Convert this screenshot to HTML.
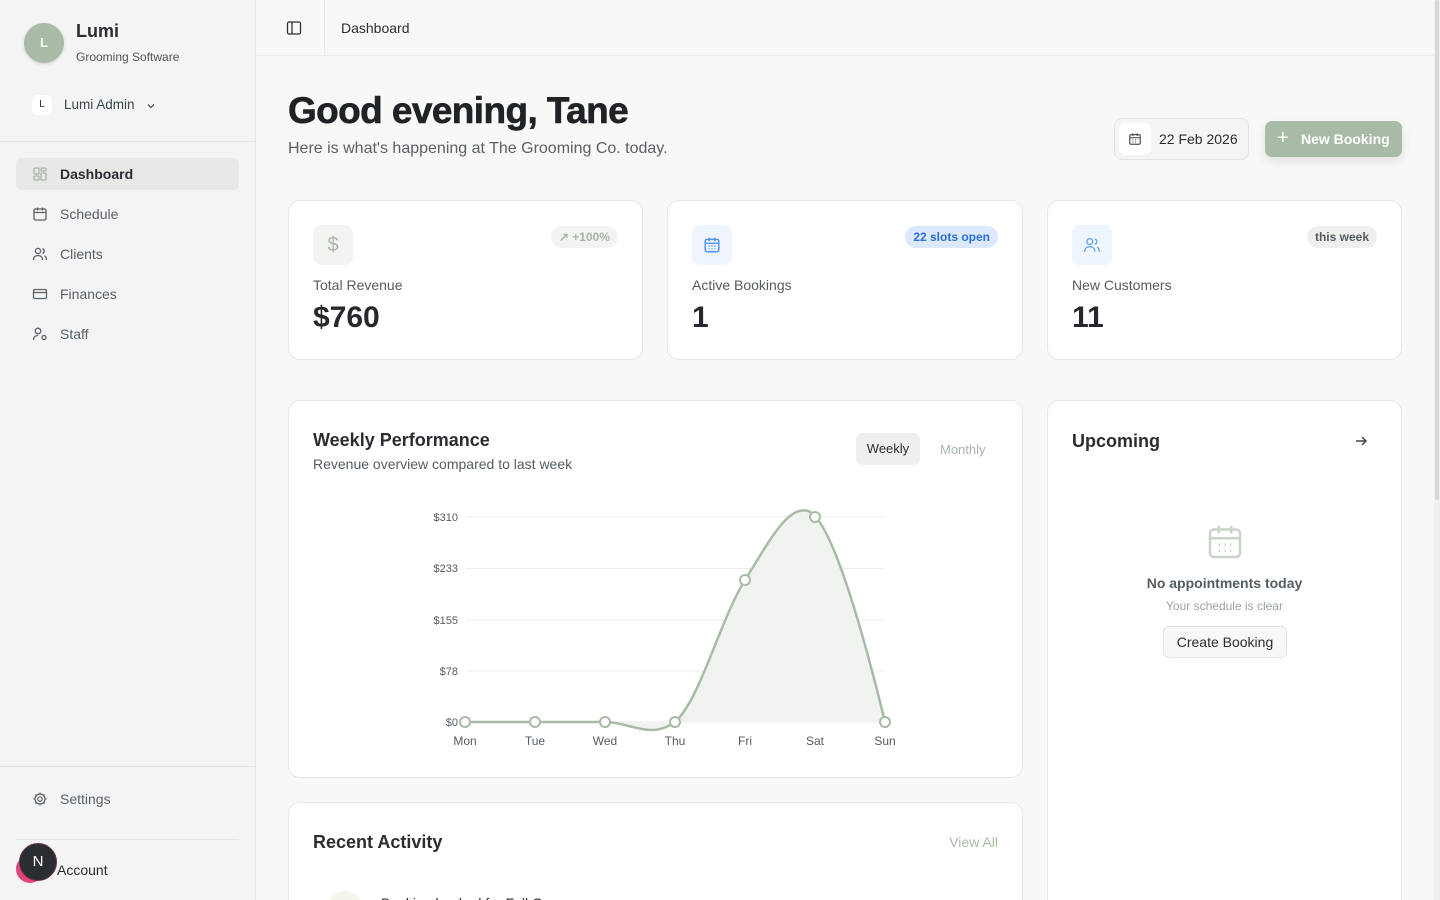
<!DOCTYPE html>
<html><head><meta charset="utf-8"><style>
*{box-sizing:border-box;margin:0;padding:0}
html,body{width:1440px;height:900px;overflow:hidden}
body{background:#f8f8f7;font-family:"Liberation Sans",sans-serif;color:#2a2d31;position:relative}
#w{position:absolute;left:0;top:0;width:1440px;height:900px;overflow:hidden}
.sb{position:absolute;left:0;top:0;width:256px;height:900px;background:#f3f4f3;border-right:1px solid #e6e6e3}
.logo{position:absolute;left:24px;top:23px;width:40px;height:40px;border-radius:50%;background:#a8bba6;color:#fff;font-weight:bold;font-size:13px;text-align:center;line-height:40px;box-shadow:0 1px 3px rgba(0,0,0,.15)}
.nav{position:absolute;left:16px;width:223px;height:32px;border-radius:6px;font-size:14px;color:#5a6068;display:flex;align-items:center;padding-left:16px}
.nav svg{margin-right:12px}
.card{position:absolute;background:#fff;border:1px solid #e6e6e2;border-radius:12px}
.ic{position:absolute;left:24px;top:24px;width:40px;height:40px;border-radius:8px;display:flex;align-items:center;justify-content:center}
.pill{position:absolute;top:25px;right:24px;height:22px;border-radius:11px;font-size:12px;font-weight:bold;padding:0 8px;line-height:22px}
.lbl{position:absolute;left:24px;top:76px;font-size:14px;color:#555b62}
.val{position:absolute;left:24px;top:100px;font-size:30px;font-weight:bold;color:#25282c}
</style></head><body><div id="w">
<div class="sb">
 <div class="logo">L</div>
 <div style="position:absolute;left:76px;top:21px;font-size:18px;font-weight:bold">Lumi</div>
 <div style="position:absolute;left:76px;top:50px;font-size:12px;color:#555">Grooming Software</div>
 <div style="position:absolute;left:32px;top:95px;width:20px;height:20px;background:#fff;border-radius:5px;font-size:10px;text-align:center;line-height:20px">L</div>
 <div style="position:absolute;left:64px;top:97px;font-size:13.5px;color:#3d444c">Lumi Admin</div>
 <svg style="position:absolute;left:145px;top:100px" width="12" height="12" viewBox="0 0 12 12"><path d="M3 4.5l3 3 3-3" stroke="#555" stroke-width="1.3" fill="none"/></svg>
 <div style="position:absolute;left:0;top:141px;width:256px;border-top:1px solid #e4e4e1"></div>
 <div class="nav" style="top:158px;background:#e6e9e5;color:#2a2d31;font-weight:bold">
  <svg width="16" height="16" viewBox="0 0 16 16" fill="none" stroke="#a8b6a8" stroke-width="1.3"><rect x="2" y="2" width="5" height="6" rx="1"/><rect x="9" y="2" width="5" height="3" rx="1"/><rect x="9" y="7" width="5" height="7" rx="1"/><rect x="2" y="10" width="5" height="4" rx="1"/></svg>Dashboard</div>
 <div class="nav" style="top:198px"><svg width="16" height="16" viewBox="0 0 16 16" fill="none" stroke="#5a6068" stroke-width="1.3"><rect x="2" y="3" width="12" height="11" rx="1.5"/><path d="M2 6.5h12M5.5 1.5v3M10.5 1.5v3"/></svg>Schedule</div>
 <div class="nav" style="top:238px"><svg width="16" height="16" viewBox="0 0 16 16" fill="none" stroke="#5a6068" stroke-width="1.3"><circle cx="6" cy="5" r="2.6"/><path d="M1.5 14c0-3 2-4.5 4.5-4.5s4.5 1.5 4.5 4.5M10.5 2.6a2.6 2.6 0 010 4.9M12.5 9.8c1.3.6 2 2 2 4.2"/></svg>Clients</div>
 <div class="nav" style="top:278px"><svg width="16" height="16" viewBox="0 0 16 16" fill="none" stroke="#5a6068" stroke-width="1.3"><rect x="1.5" y="3.5" width="13" height="9" rx="1.5"/><path d="M1.5 6.5h13"/></svg>Finances</div>
 <div class="nav" style="top:318px"><svg width="16" height="16" viewBox="0 0 16 16" fill="none" stroke="#5a6068" stroke-width="1.3"><circle cx="6" cy="5" r="2.8"/><path d="M1.5 14c0-3 2-4.5 4.5-4.5"/><circle cx="12" cy="11.5" r="2"/></svg>Staff</div>
 <div style="position:absolute;left:0;top:766px;width:256px;border-top:1px solid #e4e4e1"></div>
 <div class="nav" style="top:783px"><svg width="16" height="16" viewBox="0 0 16 16" fill="none" stroke="#5a6068" stroke-width="1.2"><circle cx="8" cy="8" r="2.2"/><circle cx="8" cy="8" r="5"/><path d="M8 1.5v1.5M8 13v1.5M1.5 8H3M13 8h1.5M3.4 3.4l1.1 1.1M11.5 11.5l1.1 1.1M3.4 12.6l1.1-1.1M11.5 4.5l1.1-1.1"/></svg>Settings</div>
 <div style="position:absolute;left:16px;top:839px;width:223px;border-top:1px solid #e4e4e1"></div>
 <div style="position:absolute;left:16px;top:855px;width:28px;height:28px;border-radius:50%;background:#e0457b"></div>
 <div style="position:absolute;left:19px;top:843px;width:38px;height:38px;border-radius:50%;background:#2a2d31;border:1px solid #6a3040;color:#fff;text-align:center;line-height:36px;font-size:15px">N</div>
 <div style="position:absolute;left:57px;top:862px;font-size:14px">Account</div>
</div>
<div style="position:absolute;left:256px;top:0;width:1178px;height:56px;border-bottom:1px solid #ebebe8">
 <svg style="position:absolute;left:30px;top:20px" width="16" height="16" viewBox="0 0 16 16" fill="none" stroke="#333" stroke-width="1.3"><rect x="1.5" y="2" width="13" height="12" rx="1.5"/><path d="M6 2v12"/></svg>
 <div style="position:absolute;left:68px;top:0;height:56px;border-left:1px solid #ebebe8"></div>
 <div style="position:absolute;left:85px;top:20px;font-size:14px">Dashboard</div>
</div>
<div style="position:absolute;right:0;top:0;width:6px;height:900px;background:#f0f0f0"><div style="margin:0 1px;height:500px;background:#d8d8d8;border-radius:3px"></div></div>
<div style="position:absolute;left:288px;top:90px;font-size:37px;font-weight:bold;letter-spacing:-.6px;color:#202326;-webkit-text-stroke:0.6px #202326">Good evening, Tane</div>
<div style="position:absolute;left:288px;top:140px;font-size:16px;color:#5a6068">Here is what's happening at The Grooming Co. today.</div>
<div style="position:absolute;left:1114px;top:118px;width:135px;height:42px;border:1px solid #e4e4e1;border-radius:8px;background:#f3f4f3">
 <div style="position:absolute;left:4px;top:4px;width:32px;height:32px;background:#fff;border-radius:6px"></div>
 <svg style="position:absolute;left:13px;top:13px" width="14" height="14" viewBox="0 0 16 16" fill="none" stroke="#555" stroke-width="1.4"><rect x="2" y="3" width="12" height="11" rx="1.5"/><path d="M2 6.5h12M5.5 1.5v3M10.5 1.5v3M5 9h1M8 9h1M11 9h.5M5 11.5h1M8 11.5h1"/></svg>
 <div style="position:absolute;left:44px;top:12px;font-size:14px">22 Feb 2026</div>
</div>
<div style="position:absolute;left:1265px;top:121px;width:137px;height:36px;border-radius:7px;background:#a8bba6;color:#fff;font-weight:bold;font-size:14px;line-height:36px;padding-left:36px;box-shadow:0 4px 10px rgba(0,0,0,.1)"><span style="position:absolute;left:12px;top:-1px;font-weight:normal;font-size:20px">+</span>New Booking</div>

<div class="card" style="left:288px;top:200px;width:355px;height:160px">
 <div class="ic" style="background:#f3f4f2"><span style="color:#a8b6a8;font-size:20px">$</span></div>
 <div class="pill" style="background:#f3f4f2;color:#a8b6a8">↗ +100%</div>
 <div class="lbl">Total Revenue</div><div class="val">$760</div></div>
<div class="card" style="left:667px;top:200px;width:356px;height:160px">
 <div class="ic" style="background:#eef5ff"><svg width="18" height="18" viewBox="0 0 16 16" fill="none" stroke="#4f94e8" stroke-width="1.3"><rect x="2" y="3" width="12" height="11" rx="1.5"/><path d="M2 6.5h12M5.5 1.5v3M10.5 1.5v3M5 9h1M7.5 9h1M10 9h1M5 11.5h1M7.5 11.5h1M10 11.5h1"/></svg></div>
 <div class="pill" style="background:#dce9fc;color:#2a6fd6">22 slots open</div>
 <div class="lbl">Active Bookings</div><div class="val">1</div></div>
<div class="card" style="left:1047px;top:200px;width:355px;height:160px">
 <div class="ic" style="background:#eef5ff"><svg width="18" height="18" viewBox="0 0 16 16" fill="none" stroke="#6aa4ea" stroke-width="1.2"><circle cx="6" cy="5" r="2.6"/><path d="M1.5 14c0-3 2-4.5 4.5-4.5s4.5 1.5 4.5 4.5M10.5 2.6a2.6 2.6 0 010 4.9M12.5 9.8c1.3.6 2 2 2 4.2"/></svg></div>
 <div class="pill" style="background:#efefed;color:#555b62">this week</div>
 <div class="lbl">New Customers</div><div class="val">11</div></div>

<div class="card" style="left:288px;top:400px;width:735px;height:378px">
 <div style="position:absolute;left:24px;top:29px;font-size:18px;font-weight:bold">Weekly Performance</div>
 <div style="position:absolute;left:24px;top:55px;font-size:14px;color:#555b62">Revenue overview compared to last week</div>
 <div style="position:absolute;left:567px;top:32px;width:64px;height:32px;background:#efefed;border-radius:6px;font-size:13px;text-align:center;line-height:32px">Weekly</div>
 <div style="position:absolute;left:651px;top:41px;font-size:13px;color:#a8b6a8">Monthly</div>
</div>
<svg style="position:absolute;left:0;top:0" width="1440" height="900">
 <g stroke="#ecece9" stroke-width="1"><path d="M466 517H885M466 568.5H885M466 620H885M466 671H885M466 722H885"/></g>
 <g font-size="11" fill="#555b62" font-family="Liberation Sans" text-anchor="end"><text x="458" y="521">$310</text><text x="458" y="572">$233</text><text x="458" y="624">$155</text><text x="458" y="675">$78</text><text x="458" y="726">$0</text></g>
 <g font-size="12" fill="#555b62" font-family="Liberation Sans" text-anchor="middle"><text x="465" y="745">Mon</text><text x="535" y="745">Tue</text><text x="605" y="745">Wed</text><text x="675" y="745">Thu</text><text x="745" y="745">Fri</text><text x="815" y="745">Sat</text><text x="885" y="745">Sun</text></g>
 <path d="M465 722H605C630 722 650 740 675 722C700 700 720 620 745 580C770 540 788 505 808 511C830 518 860 620 885 722Z" fill="#f1f3f0"/>
 <path d="M465 722H605C630 722 650 740 675 722C700 700 720 620 745 580C770 540 788 505 808 511C830 518 860 620 885 722" fill="none" stroke="#a8bba6" stroke-width="2.5"/>
 <g fill="#fff" stroke="#a8bba6" stroke-width="2"><circle cx="465" cy="722" r="5"/><circle cx="535" cy="722" r="5"/><circle cx="605" cy="722" r="5"/><circle cx="675" cy="722" r="5"/><circle cx="745" cy="580" r="5"/><circle cx="815" cy="517" r="5"/><circle cx="885" cy="722" r="5"/></g>
</svg>

<div class="card" style="left:1047px;top:400px;width:355px;height:520px">
 <div style="position:absolute;left:24px;top:30px;font-size:18px;font-weight:bold">Upcoming</div>
 <svg style="position:absolute;left:306px;top:33px" width="14" height="14" viewBox="0 0 14 14" fill="none" stroke="#444" stroke-width="1.4"><path d="M2 7h10M8 3l4 4-4 4"/></svg>
 <svg style="position:absolute;left:157px;top:121px" width="40" height="40" viewBox="0 0 16 16" fill="none" stroke="#c9d3c8" stroke-width="1"><rect x="2" y="3" width="12" height="11" rx="1.5"/><path d="M2 6.5h12M5.5 1.5v3M10.5 1.5v3M5.5 9h.5M7.8 9h.5M10 9h.5M5.5 11.5h.5M7.8 11.5h.5M10 11.5h.5"/></svg>
 <div style="position:absolute;left:0;width:100%;top:174px;text-align:center;font-size:14px;color:#555b62;font-weight:bold">No appointments today</div>
 <div style="position:absolute;left:0;width:100%;top:198px;text-align:center;font-size:12px;color:#9aa49a">Your schedule is clear</div>
 <div style="position:absolute;left:115px;top:225px;width:124px;height:32px;border:1px solid #e2e2df;border-radius:6px;background:#f8f8f7;text-align:center;line-height:30px;font-size:14px">Create Booking</div>
</div>

<div class="card" style="left:288px;top:802px;width:735px;height:140px">
 <div style="position:absolute;left:24px;top:29px;font-size:18px;font-weight:bold">Recent Activity</div>
 <div style="position:absolute;right:24px;top:31px;font-size:14px;color:#a8bba6">View All</div>
 <div style="position:absolute;left:38px;top:88px;width:36px;height:36px;border-radius:50%;background:#f4f5ea"></div>
 <div style="position:absolute;left:92px;top:92px;font-size:14px">Booking booked for Full Groom</div>
</div>
</div></body></html>
